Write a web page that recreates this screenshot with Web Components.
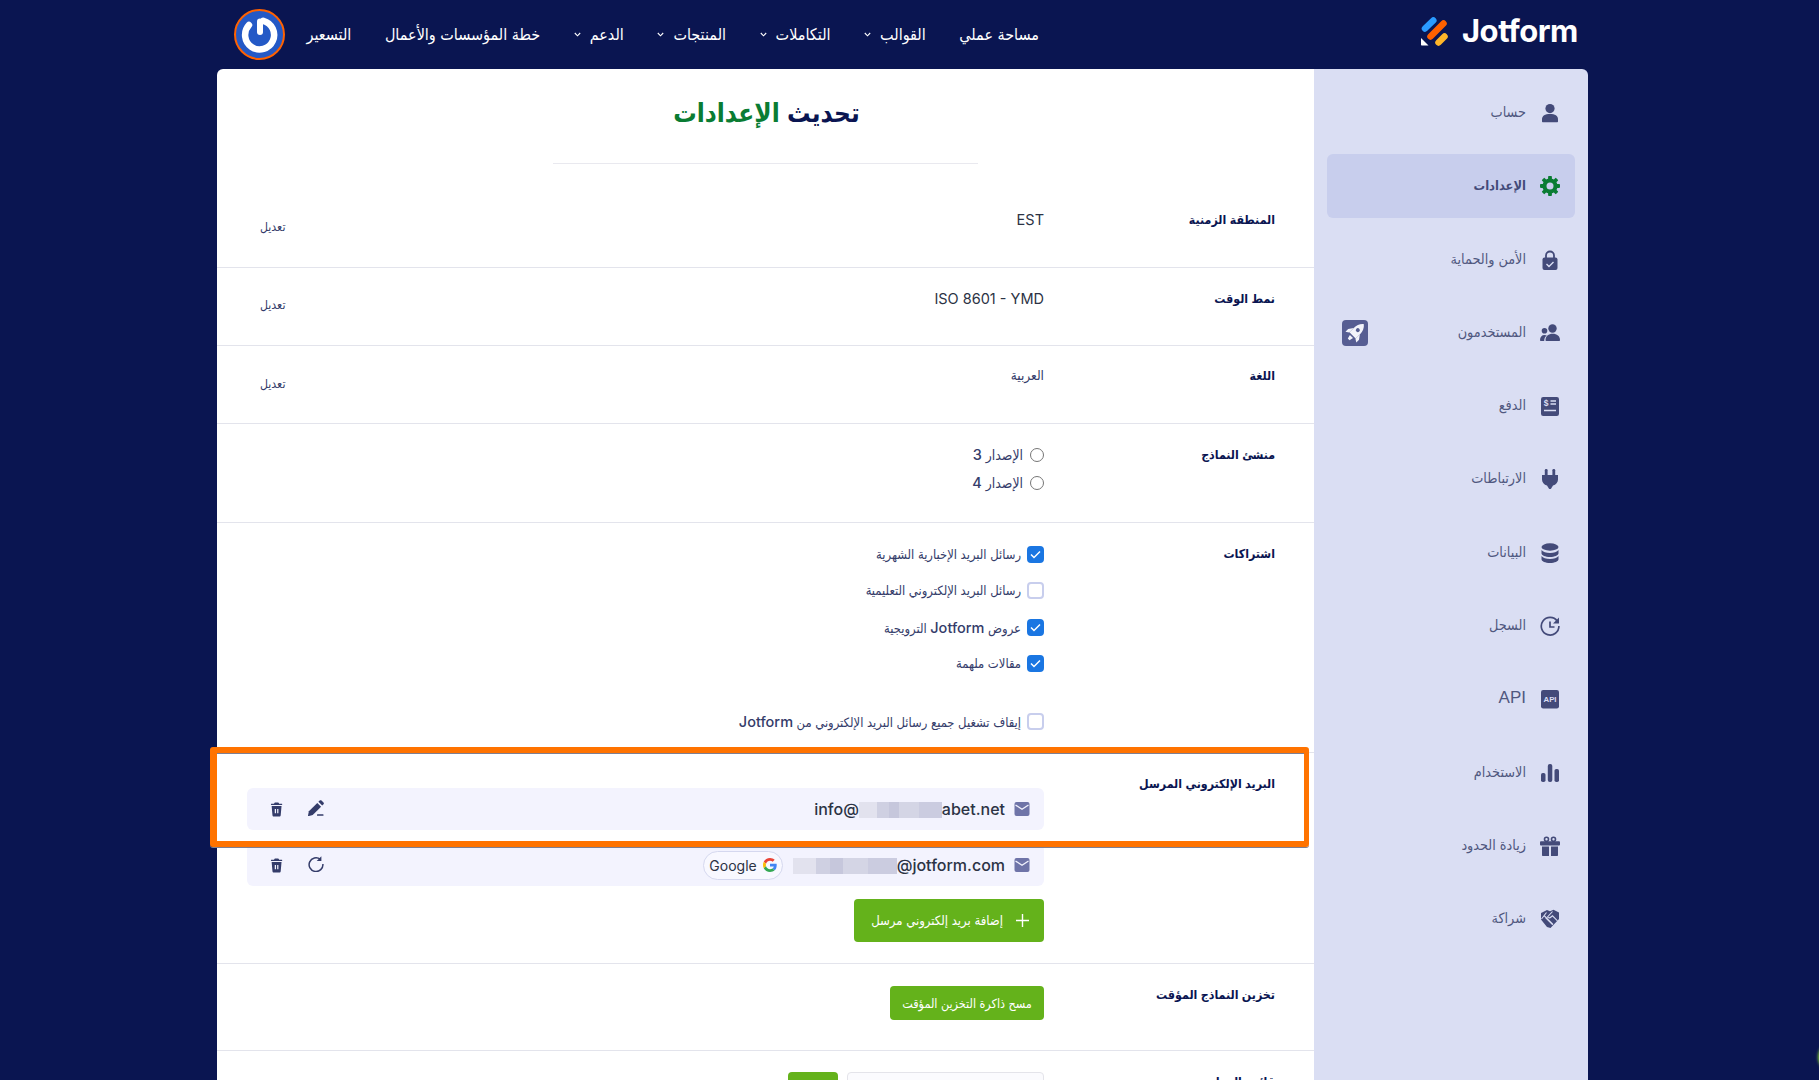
<!DOCTYPE html>
<html lang="ar" dir="rtl">
<head>
<meta charset="utf-8">
<title>Jotform</title>
<style>
  html, body { margin: 0; height: 1080px; overflow: hidden; background: #0a1551; }
  body { font-family: "Liberation Sans", "DejaVu Sans Condensed", "DejaVu Sans", sans-serif; color: #0a1551; position: relative; }
</style>
</head>
<body>
<jf-header>
  <jf-nav-item>مساحة عملي</jf-nav-item>
  <jf-nav-item caret>القوالب</jf-nav-item>
  <jf-nav-item caret>التكاملات</jf-nav-item>
  <jf-nav-item caret>المنتجات</jf-nav-item>
  <jf-nav-item caret>الدعم</jf-nav-item>
  <jf-nav-item>خطة المؤسسات والأعمال</jf-nav-item>
  <jf-nav-item>التسعير</jf-nav-item>
</jf-header>

<jf-card>
  <jf-main>
    <jf-row label="المنطقة الزمنية" style="--h:79px">
      <jf-value latin>EST</jf-value>
      <jf-edit slot="action">تعديل</jf-edit>
    </jf-row>
    <jf-row label="نمط الوقت">
      <jf-value latin>ISO 8601 - YMD</jf-value>
      <jf-edit slot="action" style="margin-top:6px">تعديل</jf-edit>
    </jf-row>
    <jf-row label="اللغة" style="--pt:20px">
      <jf-value>العربية</jf-value>
      <jf-edit slot="action" style="margin-top:8px">تعديل</jf-edit>
    </jf-row>
    <jf-row label="منشئ النماذج" style="--h:99px;--gap:8px">
      <jf-radio>الإصدار <b>3</b></jf-radio>
      <jf-radio>الإصدار <b>4</b></jf-radio>
    </jf-row>
    <jf-row label="اشتراكات" style="--h:230px;--gap:16.500px">
      <jf-check checked>رسائل البريد الإخبارية الشهرية</jf-check>
      <jf-check>رسائل البريد الإلكتروني التعليمية</jf-check>
      <jf-check checked>عروض <b>Jotform</b> الترويجية</jf-check>
      <jf-check checked>مقالات ملهمة</jf-check>
      <jf-check style="margin-top:21.500px">إيقاف تشغيل جميع رسائل البريد الإلكتروني من <b>Jotform</b></jf-check>
    </jf-row>
    <jf-row label="البريد الإلكتروني المرسل" style="--h:211px;--gap:14px;--top:14px">
      <jf-email action="edit">info@<jf-blur w="83"></jf-blur>abet.net</jf-email>
      <jf-email action="refresh"><jf-blur w="104"></jf-blur>@jotform.com<jf-google slot="badge"></jf-google></jf-email>
      <jf-button plus style="margin-top:-1px;--w:190px;--bh:43px;--fs:13px">إضافة بريد إلكتروني مرسل</jf-button>
    </jf-row>
    <jf-row label="تخزين النماذج المؤقت" style="--h:87px;--top:1px">
      <jf-button style="--w:154px;--bh:34px;--fs:12.500px">مسح ذاكرة التخزين المؤقت</jf-button>
    </jf-row>
    <jf-row label="قائمة الحظر" style="--h:60px">
      <jf-blocklist></jf-blocklist>
    </jf-row>
    <jf-highlight></jf-highlight>
  </jf-main>
  <jf-sidebar>
    <jf-side-item icon="user">حساب</jf-side-item>
    <jf-side-item icon="gear" active>الإعدادات</jf-side-item>
    <jf-side-item icon="lock">الأمن والحماية</jf-side-item>
    <jf-side-item icon="users">المستخدمون<jf-icon slot="extra" name="rocket" size="26"></jf-icon></jf-side-item>
    <jf-side-item icon="payment">الدفع</jf-side-item>
    <jf-side-item icon="plug">الارتباطات</jf-side-item>
    <jf-side-item icon="db">البيانات</jf-side-item>
    <jf-side-item icon="history">السجل</jf-side-item>
    <jf-side-item icon="api" latin>API</jf-side-item>
    <jf-side-item icon="bars">الاستخدام</jf-side-item>
    <jf-side-item icon="gift">زيادة الحدود</jf-side-item>
    <jf-side-item icon="shake">شراكة</jf-side-item>
  </jf-sidebar>
</jf-card>
<jf-glow></jf-glow>

<script>
const ICONS = {
  user: '<circle cx="10" cy="5.600" r="4.600"/><path d="M2 18.200v-2C2 12.800 5 11 10 11s8 1.800 8 5.200v2c0 .6-.4 1-1 1H3c-.6 0-1-.4-1-1z"/>',
  gear: '<g fill="#0a7c33"><rect x="8.100" y="0" width="3.800" height="20" rx=".8"/><rect x="8.100" y="0" width="3.800" height="20" rx=".8" transform="rotate(45 10 10)"/><rect x="8.100" y="0" width="3.800" height="20" rx=".8" transform="rotate(90 10 10)"/><rect x="8.100" y="0" width="3.800" height="20" rx=".8" transform="rotate(135 10 10)"/><circle cx="10" cy="10" r="7.600"/></g><circle cx="10" cy="10" r="3.500" fill="#c8ceed"/>',
  lock: '<path d="M6 9V5.500a4 4 0 0 1 8 0V9" fill="none" stroke="currentColor" stroke-width="1.800"/><rect x="2.500" y="7.500" width="15" height="12.500" rx="2"/><path d="M6.500 14l2.500 2.500 4.500-4.500" fill="none" stroke="#dadef3" stroke-width="1.400"/>',
  users: '<circle cx="12.500" cy="5.500" r="4.200"/><circle cx="4.500" cy="7.800" r="2.800"/><path d="M6.300 18c-.5 0-.8-.3-.8-.8C5.500 13 8.500 10.800 12.700 10.800S20 13 20 17.200c0 .5-.3.8-.8.8z"/><path d="M.8 18c-.5 0-.8-.3-.8-.8 0-3.200 1.800-5.200 4.500-5.200.9 0 1.600.2 2.300.6C5 13.900 4.200 15.800 4.200 18z"/>',
  payment: '<rect x="1" y="1" width="18" height="19" rx="2.200"/><text x="6" y="10" font-size="8.500" font-weight="700" text-anchor="middle" fill="#dadef3" font-family="Liberation Sans">$</text><path d="M10.500 5h5.500M10.500 8h5.500M4 14.500h12" stroke="#dadef3" stroke-width="1.600"/>',
  plug: '<rect x="4.800" y="0" width="2.800" height="6.500" rx="1.200"/><rect x="12.400" y="0" width="2.800" height="6.500" rx="1.200"/><path d="M2 6h16v4.500c0 3-2.100 5.300-5 5.900L11 19.800c-.4.500-1.600.5-2 0L7 16.400c-2.900-.6-5-2.900-5-5.900z"/>',
  db: '<ellipse cx="10" cy="4" rx="8.500" ry="3.700"/><path d="M1.500 7c1.400 2 4.600 3 8.500 3s7.100-1 8.500-3v3.200c0 2.100-3.800 3.700-8.500 3.700s-8.500-1.600-8.500-3.700z"/><path d="M1.500 13c1.400 2 4.600 3 8.500 3s7.100-1 8.500-3v3.200c0 2.100-3.800 3.700-8.500 3.700s-8.500-1.600-8.500-3.700z"/>',
  history: '<path d="M17.300 5.200A8.800 8.800 0 1 0 18.900 10" fill="none" stroke="currentColor" stroke-width="1.700"/><path d="M19 1.500v6h-6z"/><path d="M10 5.500V11h4.500" fill="none" stroke="currentColor" stroke-width="1.700"/>',
  api: '<rect x="1" y="1" width="18" height="18.500" rx="2.200"/><text x="10" y="13" font-size="7.800" font-weight="700" text-anchor="middle" fill="#dadef3" font-family="Liberation Sans" direction="ltr">API</text>',
  bars: '<rect x="1" y="10" width="4.500" height="9" rx="1.800"/><rect x="7.800" y="1" width="4.500" height="18" rx="2"/><rect x="14.500" y="6" width="4.500" height="13" rx="1.800"/>',
  gift: '<circle cx="6.500" cy="3.200" r="2" fill="none" stroke="currentColor" stroke-width="1.600"/><circle cx="13.500" cy="3.200" r="2" fill="none" stroke="currentColor" stroke-width="1.600"/><rect x="0" y="5.200" width="20" height="4.300" rx="1"/><path d="M2 10.500h7V20H3c-.6 0-1-.4-1-1zM11 10.500h7V19c0 .6-.4 1-1 1h-6z"/>',
  shake: '<path d="M1 4l6-3 3 1.200L13.500.8 19 3.500V10L10.500 19 7 18 1 10.500z"/><path d="M1.500 10l5-6.500M5.500 8.500l7 7M4 6.500l9 9M12.500 2.500L7.500 8c1 1.300 2.500 1 3.500 0l1.500-1.200 5 5" fill="none" stroke="#dadef3" stroke-width="1.100"/>',
  rocket: '<rect width="26" height="26" rx="4" fill="#565d92"/><g fill="#f3f4fb" transform="rotate(45 13 13)"><path d="M13 .5c3 2.400 4.400 6 4.400 9.500v6.500H8.600V10C8.600 6.500 10 2.900 13 .5z"/><path d="M8.600 10.500L5.300 15v3.800l3.300-2zM17.400 10.500l3.300 4.500v3.800l-3.300-2zM10.800 18h4.400l-1 4h-2.400z"/><circle cx="13" cy="9" r="2" fill="#565d92"/></g><path d="M3.500 23l2.500-1.200L4.400 20z" fill="#565d92"/>',
  trash: '<path d="M5 1.600C5 .7 5.700 0 6.500 0h3c.8 0 1.500.7 1.500 1.600h3.500c.5 0 .5 1.400 0 1.400H1.500c-.5 0-.5-1.400 0-1.400z"/><path fill-rule="evenodd" d="M2 4.300h12L13 15.500c-.1.900-.7 1.500-1.500 1.500h-7c-.8 0-1.400-.6-1.500-1.500zM5.800 7.800v5.400h1.500V7.800zM8.700 7.800v5.400h1.500V7.800z"/>',
  pencil: '<path d="M0 15.500l.9-4.200 8.400-8.400 3.800 3.800-8.400 8.400c-1.300.6-3.200 1-4.700.9z"/><path d="M10.400 1.800l1.300-1.300c.5-.5 1.300-.5 1.800 0l2 2c.5.5.5 1.300 0 1.800l-1.300 1.300z"/><rect x="9" y="14.200" width="6.500" height="1.500" rx=".5"/>',
  refresh: '<path d="M12.300 3.200A6.900 6.900 0 1 0 14.900 8" fill="none" stroke="currentColor" stroke-width="1.500"/><path d="M13.400 .3v4.700H8.700z"/>',
  mail: '<rect x=".5" y="1" width="15" height="14" rx="2"/><path d="M1.500 4l6.500 4.300L14.500 4" fill="none" stroke="#f3f3fe" stroke-width="1.300"/>'
};

class JfIcon extends HTMLElement {
  connectedCallback() {
    const name = this.getAttribute('name');
    const size = this.getAttribute('size') || 20;
    const view = this.getAttribute('view') || (name === 'rocket' ? 26 : 20);
    this.attachShadow({ mode: 'open' }).innerHTML = `
      <style>:host{display:inline-flex;flex:none;line-height:0;color:inherit}svg{fill:currentColor;display:block}</style>
      <svg width="${size}" height="${size}" viewBox="0 0 ${view} ${view}">${ICONS[name]}</svg>`;
  }
}
customElements.define('jf-icon', JfIcon);

class JfHeader extends HTMLElement {
  constructor() {
    super();
    this.attachShadow({ mode: 'open' }).innerHTML = `
      <style>
        :host { display: flex; height: 69px; align-items: center; padding-right: 239px; box-sizing: border-box; }
        .logo { display: flex; align-items: center; gap: 14px; direction: ltr; width: 159px; flex: none; margin-top: -7px; }
        .logo span { font: 700 31px Inter, "Liberation Sans", sans-serif; color: #fff; letter-spacing: -.5px; position: relative; top: -1px; }
        nav { display: flex; align-items: center; gap: 33.600px; margin-right: 382px; }
        .avatar { width: 51px; height: 51px; margin-right: 21px; flex: none; }
      </style>
      <div class="logo">
        <svg width="27" height="29" viewBox="0 0 27 29">
          <path d="M4 11.500L12.300 3.500" stroke="#2a9bff" stroke-width="6.500" stroke-linecap="round"/>
          <path d="M9.500 19.500L22.500 6.500" stroke="#ff6100" stroke-width="6.500" stroke-linecap="round"/>
          <path d="M17.500 25.500L23.500 19.500" stroke="#ffb629" stroke-width="6.500" stroke-linecap="round"/>
          <path d="M0 21l7.500 7.500H1c-.6 0-1-.4-1-1z" fill="#fff"/>
        </svg>
        <span>Jotform</span>
      </div>
      <nav><slot></slot></nav>
      <svg class="avatar" viewBox="0 0 51 51">
        <circle cx="25.500" cy="25.500" r="24.500" fill="#2459c6" stroke="#ff6100" stroke-width="2"/>
        <path d="M18 13.500A14.500 14.500 0 1 0 33 13.500" fill="none" stroke="#fff" stroke-width="6.500" stroke-linecap="round" transform="rotate(-16 25.500 25.500)"/>
        <path d="M26 12.500V23" stroke="#fff" stroke-width="6" stroke-linecap="round"/>
      </svg>`;
  }
}
customElements.define('jf-header', JfHeader);

class JfNavItem extends HTMLElement {
  constructor() {
    super();
    this.attachShadow({ mode: 'open' }).innerHTML = `
      <style>
        :host { display: inline-flex; align-items: center; gap: 9px; font-size: 16px; color: #fff; white-space: nowrap; line-height: 20px; }
        svg { display: none; flex: none; }
        :host([caret]) svg { display: block; }
      </style>
      <slot></slot>
      <svg width="7" height="5" viewBox="0 0 7 5"><path d="M.8 1l2.700 2.800L6.200 1" fill="none" stroke="#fff" stroke-width="1.100"/></svg>`;
  }
}
customElements.define('jf-nav-item', JfNavItem);

class JfCard extends HTMLElement {
  constructor() {
    super();
    this.attachShadow({ mode: 'open' }).innerHTML = `
      <style>:host { display: flex; height: 1011px; margin: 0 231px 0 217px; }</style>
      <slot></slot>`;
  }
}
customElements.define('jf-card', JfCard);

class JfMain extends HTMLElement {
  constructor() {
    super();
    this.attachShadow({ mode: 'open' }).innerHTML = `
      <style>
        :host { display: block; width: 1097px; flex: none; order: 2; background: #fff; border-top-left-radius: 6px; position: relative; }
        header { height: 120px; box-sizing: border-box; position: relative; text-align: center; padding-top: 25px; }
        h1 { margin: 0; font-size: 26px; line-height: 38px; font-weight: 700; color: #0a1551; padding-left: 2px; }
        h1 em { font-style: normal; color: #0a7c33; }
        hr { position: absolute; top: 94px; left: 336px; width: 425px; margin: 0; border: 0; border-top: 1px solid #e9e9ef; }
      </style>
      <header><h1>تحديث <em>الإعدادات</em></h1><hr></header>
      <slot></slot>`;
  }
}
customElements.define('jf-main', JfMain);

class JfRow extends HTMLElement {
  constructor() {
    super();
    this.attachShadow({ mode: 'open' }).innerHTML = `
      <style>
        :host { display: grid; grid-template-columns: 231px 1fr auto; box-sizing: border-box; height: var(--h, 78px); padding: var(--pt, 21px) 39px 0 30px; border-bottom: 1px solid #e3e4ec; overflow: hidden; }
        .label { font-size: 12.300px; font-weight: 700; line-height: 20px; color: #0a1551; }
        .value { display: flex; flex-direction: column; gap: var(--gap, 0); margin-top: var(--top, 0); min-width: 0; }
        .action { display: block; }
      </style>
      <div class="label"></div>
      <div class="value"><slot></slot></div>
      <div class="action"><slot name="action"></slot></div>`;
    this.shadowRoot.querySelector('.label').textContent = this.getAttribute('label');
  }
}
customElements.define('jf-row', JfRow);

class JfValue extends HTMLElement {
  constructor() {
    super();
    this.attachShadow({ mode: 'open' }).innerHTML = `
      <style>
        :host { display: block; font-size: 13.500px; line-height: 20px; color: #343c6a; }
        :host([latin]) { font: 14.500px/20px Inter, "Liberation Sans", sans-serif; color: #2c3345; }
      </style><slot></slot>`;
  }
}
customElements.define('jf-value', JfValue);

class JfEdit extends HTMLElement {
  constructor() {
    super();
    this.attachShadow({ mode: 'open' }).innerHTML = `
      <style>:host { display: block; font-size: 12.200px; line-height: 20px; color: #343c6a; margin: 7px 0 0 13px; }</style><slot></slot>`;
  }
}
customElements.define('jf-edit', JfEdit);

class JfRadio extends HTMLElement {
  constructor() {
    super();
    this.attachShadow({ mode: 'open' }).innerHTML = `
      <style>
        :host { display: flex; align-items: center; gap: 7px; height: 20px; font-size: 13.900px; color: #343c6a; }
        i { width: 12px; height: 12px; border: 1px solid #767676; border-radius: 50%; flex: none; background: #fff; }
        span { position: relative; top: -1px; }
        ::slotted(b) { font: 500 14.500px Inter, "Liberation Sans", sans-serif; }
      </style><i></i><span><slot></slot></span>`;
  }
}
customElements.define('jf-radio', JfRadio);

class JfCheck extends HTMLElement {
  constructor() {
    super();
    this.attachShadow({ mode: 'open' }).innerHTML = `
      <style>
        :host { display: flex; align-items: center; gap: 6px; height: 20px; font-size: 12.900px; color: #343c6a; }
        i { width: 17px; height: 17px; box-sizing: border-box; border: 2px solid #c8ceed; border-radius: 4px; flex: none; display: flex; align-items: center; justify-content: center; }
        svg { display: none; }
        :host([checked]) i { background: #1a76e2; border-color: #1a76e2; }
        :host([checked]) svg { display: block; }
        ::slotted(b) { font: 500 14.500px Inter, "Liberation Sans", sans-serif; }
      </style>
      <i><svg width="11" height="9" viewBox="0 0 11 9"><path d="M1 4.500l3 3 6-6" fill="none" stroke="#fff" stroke-width="1.500"/></svg></i>
      <span><slot></slot></span>`;
  }
}
customElements.define('jf-check', JfCheck);

class JfBlur extends HTMLElement {
  constructor() {
    super();
    this.attachShadow({ mode: 'open' }).innerHTML = `
      <style>:host { display: inline-block; height: 16px; vertical-align: -3px; width: ${this.getAttribute('w')}px; background: linear-gradient(90deg, #e2e2ee 0 22%, #cfd0e2 22% 36%, #c6c7dc 36% 48%, #d4d5e5 48% 72%, #cbcce0 72%); }</style>`;
  }
}
customElements.define('jf-blur', JfBlur);

class JfGoogle extends HTMLElement {
  constructor() {
    super();
    this.attachShadow({ mode: 'open' }).innerHTML = `
      <style>
        :host { display: inline-flex; align-items: center; gap: 6px; box-sizing: border-box; width: 80px; height: 29px; padding: 0 5px; margin-right: 10px; border: 1px solid #d5d8ef; border-radius: 15px; background: #f8f8ff; font: 14px Inter, "Liberation Sans", sans-serif; color: #2c3345; }
      </style>
      <svg width="14" height="14" viewBox="0 0 48 48">
        <path fill="#EA4335" d="M24 9.500c3.540 0 6.710 1.220 9.210 3.600l6.850-6.850C35.900 2.380 30.470 0 24 0 14.620 0 6.510 5.380 2.560 13.220l7.980 6.190C12.430 13.720 17.740 9.500 24 9.500z"/>
        <path fill="#4285F4" d="M46.980 24.550c0-1.570-.15-3.090-.38-4.550H24v9.020h12.940c-.58 2.960-2.260 5.480-4.780 7.180l7.730 6c4.510-4.180 7.090-10.360 7.090-17.650z"/>
        <path fill="#FBBC05" d="M10.530 28.590c-.48-1.450-.76-2.990-.76-4.590s.27-3.140.76-4.590l-7.980-6.190C.92 16.460 0 20.120 0 24c0 3.880.92 7.540 2.560 10.780l7.970-6.190z"/>
        <path fill="#34A853" d="M24 48c6.480 0 11.930-2.130 15.890-5.810l-7.730-6c-2.150 1.450-4.920 2.300-8.160 2.300-6.260 0-11.570-4.220-13.470-9.910l-7.980 6.190C6.510 42.620 14.620 48 24 48z"/>
      </svg>
      <span>Google</span>`;
  }
}
customElements.define('jf-google', JfGoogle);

class JfEmail extends HTMLElement {
  constructor() {
    super();
    const action = this.getAttribute('action') === 'edit' ? 'pencil' : 'refresh';
    this.attachShadow({ mode: 'open' }).innerHTML = `
      <style>
        :host { display: flex; align-items: center; box-sizing: border-box; height: 42px; padding: 0 14px 0 23px; border-radius: 6px; background: #f3f3fe; color: #343c6a; }
        .addr { direction: ltr; font: 500 16px Inter, "Liberation Sans", sans-serif; color: #2c3345; margin-right: 9px; white-space: nowrap; }
        .actions { margin-right: auto; display: flex; align-items: center; gap: 24px; }
        .mail { color: #6f74a8; }
        .tool { margin-top: -2px; }
      </style>
      <jf-icon class="mail" name="mail" size="16" view="16"></jf-icon>
      <div class="addr"><slot></slot></div>
      <slot name="badge"></slot>
      <div class="actions">
        <jf-icon class="tool" name="${action}" size="16" view="16"></jf-icon>
        <jf-icon name="trash" size="17" view="17" style="width:14px"></jf-icon>
      </div>`;
  }
}
customElements.define('jf-email', JfEmail);

class JfButton extends HTMLElement {
  constructor() {
    super();
    this.attachShadow({ mode: 'open' }).innerHTML = `
      <style>
        :host { display: flex; align-items: center; justify-content: center; gap: 12px; align-self: flex-start; box-sizing: border-box; width: var(--w); height: var(--bh); border-radius: 4px; background: #64b21b; color: #fff; font-size: var(--fs); white-space: nowrap; }
        :host([plus]) { justify-content: flex-start; padding-right: 14px; }
        svg { display: none; flex: none; }
        :host([plus]) svg { display: block; }
      </style>
      <svg width="15" height="15" viewBox="0 0 15 15"><path d="M7.500 1v13M1 7.500h13" stroke="#fff" stroke-width="1.400"/></svg>
      <span><slot></slot></span>`;
  }
}
customElements.define('jf-button', JfButton);

class JfBlocklist extends HTMLElement {
  constructor() {
    super();
    this.attachShadow({ mode: 'open' }).innerHTML = `
      <style>
        :host { display: flex; gap: 9px; }
        .field { width: 197px; height: 40px; box-sizing: border-box; border: 1px solid #e4e4ea; border-radius: 4px; background: #fbfbfe; }
        .go { width: 50px; height: 40px; border-radius: 4px; background: #64b21b; }
      </style>
      <div class="field"></div><div class="go"></div>`;
  }
}
customElements.define('jf-blocklist', JfBlocklist);

class JfHighlight extends HTMLElement {
  constructor() {
    super();
    this.attachShadow({ mode: 'open' }).innerHTML = `
      <style>
        :host { position: absolute; top: 678px; left: -7px; width: 1099px; height: 100px; box-sizing: border-box; border: solid #ff7300; border-width: 6px 5px 6px 7px; border-radius: 3px; box-shadow: 0 1px 0 #7d7f92, inset 0 1px 0 #7d7f92; pointer-events: none; }
      </style>`;
  }
}
customElements.define('jf-highlight', JfHighlight);

class JfSidebar extends HTMLElement {
  constructor() {
    super();
    this.attachShadow({ mode: 'open' }).innerHTML = `
      <style>:host { display: flex; flex-direction: column; gap: 9.300px; order: 1; box-sizing: border-box; width: 274px; flex: none; padding: 12px 13px 0; background: #dadef3; border-top-right-radius: 6px; }</style>
      <slot></slot>`;
  }
}
customElements.define('jf-sidebar', JfSidebar);

class JfSideItem extends HTMLElement {
  constructor() {
    super();
    this.attachShadow({ mode: 'open' }).innerHTML = `
      <style>
        :host { display: flex; align-items: center; gap: 14px; box-sizing: border-box; height: 64px; padding: 0 15px; border-radius: 6px; font-size: 14.300px; color: #50587f; }
        :host([active]) { background: #c8ceed; font-weight: 700; font-size: 12.800px; color: #434a79; }
        :host([latin]) { font-size: 17px; }
        .text { position: relative; top: -1px; }
        jf-icon { color: #434a79; }
        .extra { margin-right: auto; display: flex; }
      </style>
      <jf-icon name="${this.getAttribute('icon')}"></jf-icon>
      <span class="text"><slot></slot></span>
      <span class="extra"><slot name="extra"></slot></span>`;
  }
}
customElements.define('jf-side-item', JfSideItem);

class JfGlow extends HTMLElement {
  constructor() {
    super();
    this.attachShadow({ mode: 'open' }).innerHTML = `
      <style>:host { position: absolute; top: 1042px; right: -29px; width: 30px; height: 30px; border-radius: 50%; background: #7cc62a; filter: blur(1.500px); }</style>`;
  }
}
customElements.define('jf-glow', JfGlow);
</script>
</body>
</html>
